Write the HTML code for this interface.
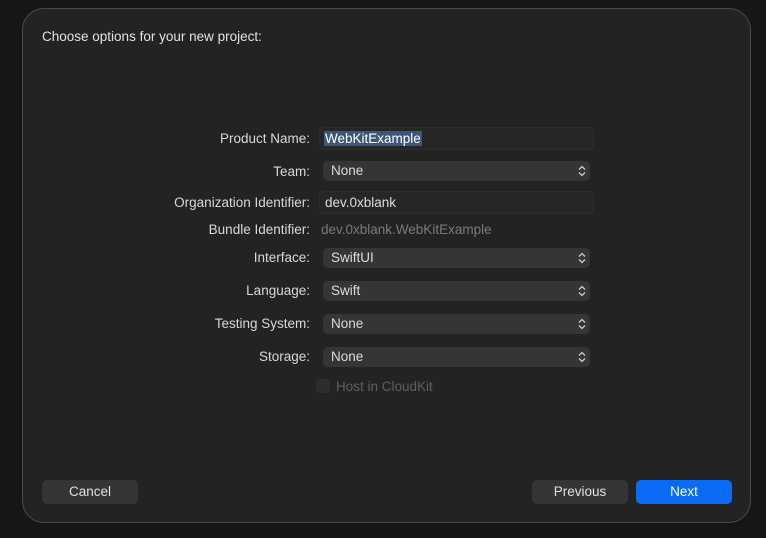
<!DOCTYPE html>
<html><head><style>
*{margin:0;padding:0;box-sizing:border-box}
body{width:766px;height:538px;background:#161616;font-family:"Liberation Sans",sans-serif;font-size:13.5px;color:#dcdcdc;position:relative;overflow:hidden}
.win{position:absolute;left:22px;top:8px;width:729px;height:515px;background:#232323;border:1px solid #4a4a4a;border-radius:22px}
.t{position:absolute;white-space:nowrap}
.lbl{position:absolute;right:456px;white-space:nowrap;text-align:right;color:#d8d8d8}
.tf{position:absolute;left:319px;width:275px;height:23px;border:1px solid #2e2e2e;background:#262626;border-radius:5px}
.pop{position:absolute;left:323px;width:267px;height:20px;background:#353535;border-radius:5px}
.pop span{position:absolute;left:8px;top:2px}
.pop svg{position:absolute;right:4px;top:4px}
.btn{position:absolute;top:480px;height:24px;width:96px;border-radius:5px;background:#353535;text-align:center;line-height:24px;color:#e0e0e0}
</style></head><body>
<div class="win"></div>
<div class="t" style="left:42px;top:29px;color:#e2e2e2">Choose options for your new project:</div>

<div class="lbl" style="top:131px">Product Name:</div>
<div class="tf" style="top:127px"></div>
<div class="t" style="left:324px;top:131px;background:#3b5679;color:#fff;padding:0 1px">WebKitExample</div>

<div class="lbl" style="top:164px">Team:</div>
<div class="pop" style="top:161px"><span>None</span><svg width="8" height="12" viewBox="0 0 8 12"><path d="M1 4.5L4 1.5L7 4.5M1 7.5L4 10.5L7 7.5" fill="none" stroke="#ccc" stroke-width="1.3"/></svg></div>

<div class="lbl" style="top:195px">Organization Identifier:</div>
<div class="tf" style="top:191px"></div>
<div class="t" style="left:325px;top:195px">dev.0xblank</div>

<div class="lbl" style="top:222px">Bundle Identifier:</div>
<div class="t" style="left:321px;top:222px;color:#7a7a7a">dev.0xblank.WebKitExample</div>

<div class="lbl" style="top:250px">Interface:</div>
<div class="pop" style="top:248px"><span>SwiftUI</span><svg width="8" height="12" viewBox="0 0 8 12"><path d="M1 4.5L4 1.5L7 4.5M1 7.5L4 10.5L7 7.5" fill="none" stroke="#ccc" stroke-width="1.3"/></svg></div>

<div class="lbl" style="top:283px">Language:</div>
<div class="pop" style="top:281px"><span>Swift</span><svg width="8" height="12" viewBox="0 0 8 12"><path d="M1 4.5L4 1.5L7 4.5M1 7.5L4 10.5L7 7.5" fill="none" stroke="#ccc" stroke-width="1.3"/></svg></div>

<div class="lbl" style="top:316px">Testing System:</div>
<div class="pop" style="top:314px"><span>None</span><svg width="8" height="12" viewBox="0 0 8 12"><path d="M1 4.5L4 1.5L7 4.5M1 7.5L4 10.5L7 7.5" fill="none" stroke="#ccc" stroke-width="1.3"/></svg></div>

<div class="lbl" style="top:349px">Storage:</div>
<div class="pop" style="top:347px"><span>None</span><svg width="8" height="12" viewBox="0 0 8 12"><path d="M1 4.5L4 1.5L7 4.5M1 7.5L4 10.5L7 7.5" fill="none" stroke="#ccc" stroke-width="1.3"/></svg></div>

<div style="position:absolute;left:316px;top:379px;width:14px;height:14px;border-radius:4px;background:#2d2d2d"></div>
<div class="t" style="left:336px;top:379px;color:#5f5f5f">Host in CloudKit</div>

<div class="btn" style="left:42px">Cancel</div>
<div class="btn" style="left:532px">Previous</div>
<div class="btn" style="left:636px;background:#0a6cf5;color:#fff">Next</div>
</body></html>
